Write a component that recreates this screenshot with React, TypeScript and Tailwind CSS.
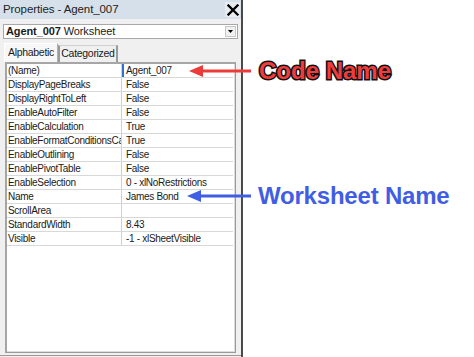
import React from "react";

const rows: [string, string][] = [
  ["(Name)", "Agent_007"],
  ["DisplayPageBreaks", "False"],
  ["DisplayRightToLeft", "False"],
  ["EnableAutoFilter", "False"],
  ["EnableCalculation", "True"],
  ["EnableFormatConditionsCalculation", "True"],
  ["EnableOutlining", "False"],
  ["EnablePivotTable", "False"],
  ["EnableSelection", "0 - xlNoRestrictions"],
  ["Name", "James Bond"],
  ["ScrollArea", ""],
  ["StandardWidth", "8.43"],
  ["Visible", "-1 - xlSheetVisible"],
];

export default function App() {
  return (
    <div className="relative w-[474px] h-[357px] bg-white flex overflow-hidden font-['Liberation_Sans',Arial,sans-serif] text-[#1a1a1a]">
      {/* Properties panel */}
      <div className="w-[241px] h-full bg-[#f0f0f0] flex flex-col">
        {/* Title bar */}
        <div className="h-[19px] bg-[#d6e0ea] flex items-center justify-between pl-[3px]">
          <span className="text-[11.5px] tracking-[-0.1px] text-[#222]">Properties - Agent_007</span>
          <div className="w-[15px] h-[15px] mr-[1px] flex items-center justify-center bg-[#e9ecef]">
            <svg width="12" height="12" viewBox="0 0 12 12">
              <path d="M1.5 1.5 L10.5 10.5 M10.5 1.5 L1.5 10.5" stroke="#000" strokeWidth="2.3" strokeLinecap="square" />
            </svg>
          </div>
        </div>
        {/* Dropdown */}
        <div className="mt-[5px] mx-[3px] h-[15px] bg-white border border-[#a8a8a8] flex items-center justify-between">
          <div className="pl-[2px] text-[11px] leading-none tracking-[-0.1px]">
            <span className="font-bold">Agent_007</span> <span>Worksheet</span>
          </div>
          <div className="w-[11px] h-[11px] mr-[1px] bg-[#f0f0f0] border border-[#c8c8c8] flex items-center justify-center">
            <svg width="5" height="3" viewBox="0 0 5 3">
              <path d="M0 0 L5 0 L2.5 3 Z" fill="#000" />
            </svg>
          </div>
        </div>
        {/* Tabs */}
        <div className="mt-[4px] pl-[4px] flex items-end h-[19px]">
          <div className="h-[19px] w-[54px] bg-[#f7f7f7] border-t border-l border-white border-r border-r-[#b0b0b0] flex items-center justify-center text-[10.5px] tracking-[-0.3px]">
            Alphabetic
          </div>
          <div className="h-[17px] w-[60px] border-t border-t-[#d0d0d0] border-l-2 border-l-[#9a9a9a] border-r-2 border-r-[#9a9a9a] flex items-center justify-center text-[10.5px] tracking-[-0.3px]">
            Categorized
          </div>
        </div>
        {/* Grid */}
        <div className="mx-[5px] h-[291px] border-t-2 border-l-2 border-[#a6a6a6] border-r border-b border-r-[#9a9a9a] border-b-[#9a9a9a] bg-white">
          <div className="h-full border-r border-b border-[#dcdcdc] pr-[1px]">
            {rows.map(([name, value], i) => (
              <div key={i} className="h-[14px] flex border-b border-[#d8d8d8] text-[10px] tracking-[-0.3px] leading-[13px]">
                <div className="w-[115px] shrink-0 overflow-hidden whitespace-nowrap pl-[1px] border-r border-[#d0d0d0]">
                  {name}
                </div>
                <div className="flex-1 flex whitespace-nowrap overflow-hidden">
                  <div className={i === 0 ? "w-[2px] h-[13px] bg-[#2f74c8]" : "w-[2px]"} />
                  <span className="pl-[2px]">{value}</span>
                </div>
              </div>
            ))}
          </div>
        </div>
        <div className="mt-[2px] h-[1px] bg-[#9a9a9a]" />
      </div>
      <div className="w-[2px] h-full bg-[#4a4a4a]" />

      {/* Annotation arrows */}
      <svg className="absolute left-0 top-0 pointer-events-none" width="474" height="357" viewBox="0 0 474 357">
        <line x1="199" y1="71" x2="251" y2="71" stroke="#ec3b3b" strokeWidth="3" />
        <path d="M189 71 L203 65 L203 77 Z" fill="#ec3b3b" />
        <line x1="197" y1="196" x2="251" y2="196" stroke="#3f5ee4" strokeWidth="3" />
        <path d="M187 196 L201 190 L201 202 Z" fill="#3f5ee4" />
      </svg>
      <div className="absolute left-[259px] top-[56px] text-[24px] font-bold leading-[30px] text-[#f03c3c] [-webkit-text-stroke:3px_#111] [paint-order:stroke_fill]">
        Code Name
      </div>
      <div className="absolute left-[258px] top-[181px] text-[24px] font-bold leading-[30px] text-[#3f5ee4] tracking-[-0.2px]">
        Worksheet Name
      </div>
    </div>
  );
}
